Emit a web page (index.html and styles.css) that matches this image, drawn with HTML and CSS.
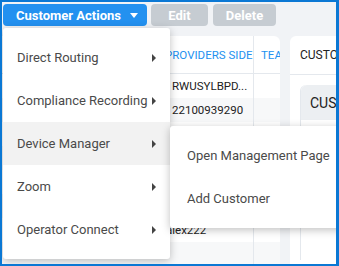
FILE: index.html
```html
<!DOCTYPE html>
<html lang="en">
<head>
    <meta charset="UTF-8">
    <title>Customers</title>
    <link rel="stylesheet" href="styles.css">
</head>
<body>
    <div class="frame">
        <div class="toolbar">
            <button class="btn btn-primary">Customer Actions <span class="caret"></span></button>
            <button class="btn btn-disabled btn-edit">Edit</button>
            <button class="btn btn-disabled btn-delete">Delete</button>
        </div>

        <div class="content">
            <div class="table-card">
                <div class="row head">
                    <div class="cell c-main">PROVIDERS SIDE</div>
                    <div class="cell c-team">TEAMS</div>
                </div>
                <div class="row"><div class="cell c-main">RWUSYLBPD...</div><div class="cell c-team"></div></div>
                <div class="row alt"><div class="cell c-main">22100939290</div><div class="cell c-team"></div></div>
                <div class="row"><div class="cell c-main">-</div><div class="cell c-team"></div></div>
                <div class="row alt"><div class="cell c-main">-</div><div class="cell c-team"></div></div>
                <div class="row"><div class="cell c-main">-</div><div class="cell c-team"></div></div>
                <div class="row alt"><div class="cell c-main">-</div><div class="cell c-team"></div></div>
                <div class="row"><div class="cell c-main c-clip">alex222</div><div class="cell c-team"></div></div>
                <div class="row alt"><div class="cell c-main"></div><div class="cell c-team"></div></div>
            </div>

            <div class="side-card">
                <div class="side-title">CUSTOMER</div>
                <div class="inner-card">
                    <div class="inner-head">CUSTOMER</div>
                    <div class="inner-body">
                        <span class="status">Created</span>
                    </div>
                </div>
            </div>
        </div>

        <div class="menu">
            <div class="menu-item">Direct Routing <span class="arrow"></span></div>
            <div class="menu-item">Compliance Recording <span class="arrow"></span></div>
            <div class="menu-item active">Device Manager <span class="arrow"></span>
                <div class="submenu">
                    <div class="menu-item">Open Management Page</div>
                    <div class="menu-item">Add Customer</div>
                </div>
            </div>
            <div class="menu-item">Zoom <span class="arrow"></span></div>
            <div class="menu-item">Operator Connect <span class="arrow"></span></div>
        </div>
    </div>
</body>
</html>
```

FILE: styles.css
```css
body {
    margin: 0;
    font-family: Roboto, "Liberation Sans", Arial, sans-serif;
    background-color: #ffffff;
}
.frame {
    position: relative;
    width: 339px;
    height: 266px;
    box-sizing: border-box;
    border: 2px solid #0b78d4;
    border-right-width: 3px;
    background-color: #f1f3f6;
    overflow: hidden;
}
.toolbar {
    display: flex;
    padding: 2px 0 0 1px;
}
.btn {
    height: 22px;
    border: none;
    border-radius: 4px;
    color: #ffffff;
    font-family: Roboto, "Liberation Sans", Arial, sans-serif;
    font-size: 13px;
    font-weight: bold;
    padding: 0;
}
.btn-primary {
    width: 144px;
    background-color: #2391f0;
    display: flex;
    align-items: center;
    padding-left: 13px;
}
.caret {
    margin-left: 9px;
    width: 0;
    height: 0;
    border-left: 4px solid transparent;
    border-right: 4px solid transparent;
    border-top: 5px solid #ffffff;
}
.btn-disabled {
    background-color: #c6ccd2;
}
.btn-edit {
    width: 57px;
    margin-left: 4px;
}
.btn-delete {
    width: 63px;
    margin-left: 5px;
}
.content {
    display: flex;
    gap: 10px;
    padding-top: 10px;
    height: 240px;
}
.table-card {
    width: 278px;
    flex-shrink: 0;
    background-color: #ffffff;
    border-radius: 0 6px 0 0;
    font-size: 11.5px;
    color: #222222;
}
.row {
    display: flex;
    height: 24px;
    align-items: center;
}
.row.head {
    height: 37px;
    border-bottom: 1px solid #e4e8ed;
    color: #2391f0;
}
.row.alt {
    background-color: #f7f8f9;
}
.cell {
    height: 100%;
    display: flex;
    align-items: center;
    box-sizing: border-box;
    white-space: nowrap;
    overflow: hidden;
}
.c-main {
    width: 252px;
    flex-shrink: 0;
    padding-left: 170px;
    border-right: 1px solid #e4e8ed;
}
.row.head .c-main {
    padding-left: 163px;
}
.c-clip {
    padding-left: 164px;
}
.c-team {
    width: 26px;
    flex-shrink: 0;
    padding-left: 7px;
}
.side-card {
    flex: 1;
    min-width: 0;
    background-color: #ffffff;
    border-radius: 6px 0 0 0;
    font-size: 12px;
    color: #222222;
    overflow: hidden;
    white-space: nowrap;
}
.side-title {
    height: 38px;
    padding-left: 10px;
    display: flex;
    align-items: center;
    border-bottom: 1px solid #e4e8ed;
}
.inner-card {
    margin: 10px 0 0 10px;
    border-left: 1px solid #e4e8ed;
    border-radius: 6px 0 0 0;
}
.inner-head {
    height: 35px;
    background-color: #eceff2;
    border-radius: 6px 0 0 0;
    padding-left: 9px;
    display: flex;
    align-items: center;
    font-size: 14px;
}
.inner-body {
    height: 140px;
    padding: 97px 0 0 27px;
    box-sizing: border-box;
}
.status {
    color: #e53935;
    font-size: 12px;
}
.menu {
    position: absolute;
    left: 1px;
    top: 26px;
    width: 167px;
    padding: 8px 0;
    background-color: #ffffff;
    border-radius: 3px;
    box-shadow: 0 2px 8px rgba(0, 0, 0, 0.25);
}
.menu-item {
    position: relative;
    height: 43px;
    display: flex;
    align-items: center;
    justify-content: space-between;
    padding: 0 14px;
    font-size: 13px;
    color: #4a4a4a;
}
.menu-item.active {
    background-color: #f2f2f2;
}
.arrow {
    width: 0;
    height: 0;
    border-top: 4px solid transparent;
    border-bottom: 4px solid transparent;
    border-left: 4px solid #444444;
}
.submenu {
    position: absolute;
    left: 100%;
    top: 4px;
    width: 180px;
    padding: 8px 0;
    background-color: #ffffff;
    border-radius: 3px;
    box-shadow: 0 2px 8px rgba(0, 0, 0, 0.25);
}
.submenu .menu-item {
    padding-left: 17px;
}
```
